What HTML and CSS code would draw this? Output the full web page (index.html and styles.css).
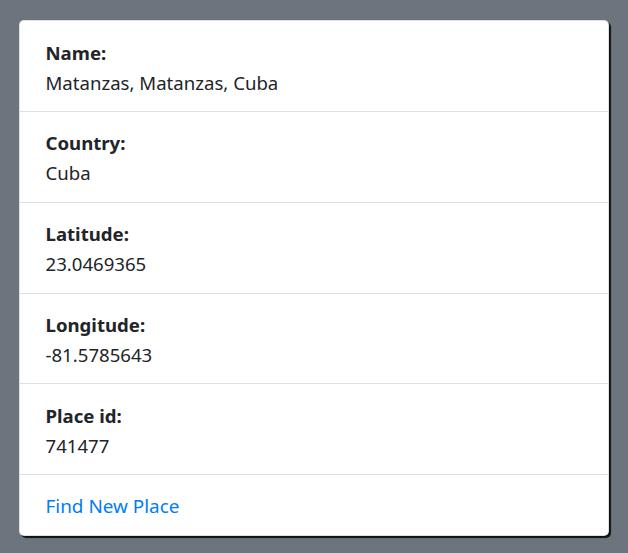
FILE: index.html
```html
<!DOCTYPE html>
<html lang="en">
<head>
<meta charset="utf-8">
<title>Place</title>
<link rel="stylesheet" href="styles.css">
</head>
<body>
<div class="card">
  <ul class="list">
    <li class="item"><div class="label">Name:</div><div class="value">Matanzas, Matanzas, Cuba</div></li>
    <li class="item"><div class="label">Country:</div><div class="value">Cuba</div></li>
    <li class="item"><div class="label">Latitude:</div><div class="value">23.0469365</div></li>
    <li class="item"><div class="label">Longitude:</div><div class="value">-81.5785643</div></li>
    <li class="item"><div class="label">Place id:</div><div class="value">741477</div></li>
    <li class="item"><a class="link" href="#">Find New Place</a></li>
  </ul>
</div>
</body>
</html>
```

FILE: styles.css
```css
html, body {
  margin: 0;
  height: 100%;
}
body {
  background: #6c757d;
  padding: 20px 19px 0 19px;
  box-sizing: border-box;
  font-family: "Noto Sans", "Open Sans", sans-serif;
  font-size: 18.6px;
  line-height: 30px;
  color: #212529;
}
.card {
  background: #fff;
  border: 1px solid rgba(0,0,0,.125);
  border-radius: 5px;
  box-shadow: 2px 2px 1px rgba(0,0,0,.85);
  overflow: hidden;
}
.list {
  list-style: none;
  margin: 0;
  padding: 0;
}
.item {
  padding: 16.25px 25px 13.5px 25.5px;
  border-bottom: 1px solid rgba(0,0,0,.125);
}
.item:first-child {
  padding-top: 16.5px;
}
.item:last-child {
  border-bottom: 0;
}
.label {
  font-weight: 700;
}
.link {
  color: #007bff;
  text-decoration: none;
  font-size: 18.9px;
}
```
